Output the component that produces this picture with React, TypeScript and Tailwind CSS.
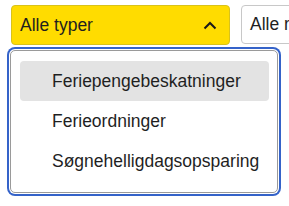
import React from 'react';

const options = ['Feriepengebeskatninger', 'Ferieordninger', 'Søgnehelligdagsopsparing'];

export default function App() {
  return (
    <div className="w-[289px] h-[206px] overflow-hidden bg-white pt-[5px] pl-[11px] text-[#1f1f1f] font-['Liberation_Sans',Arial,sans-serif]">
      <div className="flex gap-[11px] w-[400px]">
        <button className="flex items-center justify-between w-[219px] h-10 rounded-[4px] border border-[#d9c21a] bg-[#ffdc00] pl-2 pr-3 text-[17.5px]">
          <span>Alle typer</span>
          <svg width="14" height="9" viewBox="0 0 14 9" fill="none">
            <path d="M1.5 7.5L7 2L12.5 7.5" stroke="#1a1a1a" strokeWidth="2" />
          </svg>
        </button>
        <button className="flex items-center w-[160px] h-[39px] rounded-[4px] border border-[#c8c8c8] bg-white pl-2 text-[17.5px]">
          <span>Alle regioner</span>
        </button>
      </div>
      <div className="mt-[5px] ml-[-1px] w-[268px] h-[143px] rounded-[5px] border border-[#9a9a9a] ring-2 ring-[#3563c9] ring-offset-1 bg-white pt-[10px] pl-[9px] pr-2">
        {options.map((o, i) => (
          <div
            key={o}
            className={`flex items-center h-10 pl-8 rounded-[4px] text-[17.5px] ${i === 0 ? 'bg-[#e3e3e3]' : ''}`}
          >
            {o}
          </div>
        ))}
      </div>
    </div>
  );
}
